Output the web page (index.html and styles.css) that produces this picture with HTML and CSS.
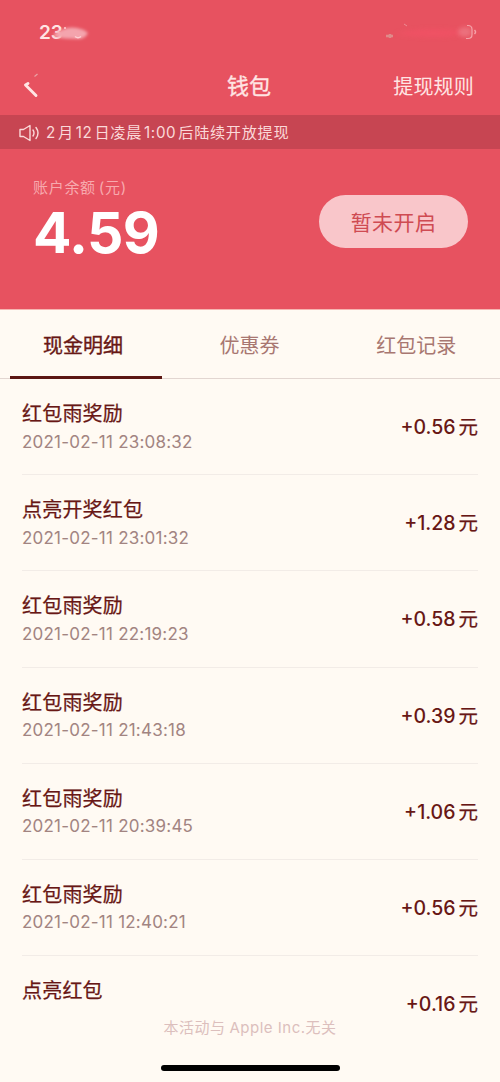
FILE: index.html
```html
<!DOCTYPE html>
<html lang="zh-CN">
<head>
<meta charset="utf-8">
<meta name="viewport" content="width=device-width, initial-scale=1">
<title>钱包</title>
<link rel="stylesheet" href="styles.css">
</head>
<body>
<div class="screen">
  <header class="hero">
    <div class="status">
      <div class="clock"><span>23</span><svg class="smudge" width="36" height="18" viewBox="0 0 36 18"><defs><filter id="soft" x="-30%" y="-50%" width="160%" height="200%"><feGaussianBlur stdDeviation="1.6"/></filter></defs><path d="M0 9Q8 3 18 2.500Q29 3 34 8Q31 14 24 14Q11 14 0 12Z" fill="#f4a4ad" filter="url(#soft)"/><path d="M11 2v2M21 11.500q3 2.500 6 0" stroke="#ffd0d4" stroke-width="1.500" fill="none"/></svg></div>
      <svg class="indicators" width="94" height="24" viewBox="0 0 94 24"><defs><filter id="haze" x="-20%" y="-100%" width="140%" height="300%"><feGaussianBlur stdDeviation="2"/></filter></defs><path d="M8 14Q38 5 84 12Q60 20 24 16Z" fill="#f75168" opacity=".5" filter="url(#haze)"/><ellipse cx="78" cy="12" rx="7" ry="5" fill="#f0a0a7" opacity=".4" filter="url(#haze)"/><path d="M-1 16h7M3 14v4" stroke="#dda29b" stroke-width="2.500" opacity=".7"/><path d="M17 4l3 2" stroke="#ee8c94"/><path d="M80 5.500h1q4 0 4 4v5q0 4-4 4h-2" fill="none" stroke="#f5a2a9" stroke-width="1.200"/><path d="M87.500 10q2 2 0 4" fill="none" stroke="#f5a2a9" stroke-width="1.500"/></svg>
    </div>
    <nav class="nav">
      <svg class="back" width="18" height="28" viewBox="0 0 18 28"><path d="M12.500 4.500l3-2.500" stroke="#e9a2a4" stroke-width="1.200"/><path d="M6 11.500L3.500 13L14 23.500" fill="none" stroke="#ffe5e4" stroke-width="2.900" stroke-linecap="round" stroke-linejoin="round"/></svg>
      <h1 class="title">钱包</h1>
      <a class="rules">提现规则</a>
    </nav>
    <div class="notice">
      <svg class="speaker" width="21" height="18" viewBox="0 0 21 18" fill="none" stroke="#fbd9d9" stroke-width="1.400" stroke-linejoin="round" stroke-linecap="round"><path d="M1 5.500h3.500L11 1.500v15L4.500 12.500H1z"/><path d="M14 6q2 3 0 6M17 3.500q4 5.500 0 11"/></svg>
      <p class="notice-text"><span>2</span><span>月</span><span>12</span><span>日凌晨</span><span>1:00</span><span>后陆续开放提现</span></p>
    </div>
    <section class="balance">
      <div>
        <p class="label"><span>账户余额</span><span>(元)</span></p>
        <p class="sum">4.59</p>
      </div>
      <button class="withdraw">暂未开启</button>
    </section>
  </header>
  <div class="tabs">
    <div class="tab active">现金明细</div>
    <div class="tab">优惠券</div>
    <div class="tab">红包记录</div>
  </div>
  <ul class="list">
    <li class="row"><div><p class="name">红包雨奖励</p><p class="time">2021-02-11 23:08:32</p></div><p class="amount"><span>+0.56</span><span class="unit">元</span></p></li>
    <li class="row"><div><p class="name">点亮开奖红包</p><p class="time">2021-02-11 23:01:32</p></div><p class="amount"><span>+1.28</span><span class="unit">元</span></p></li>
    <li class="row"><div><p class="name">红包雨奖励</p><p class="time">2021-02-11 22:19:23</p></div><p class="amount"><span>+0.58</span><span class="unit">元</span></p></li>
    <li class="row"><div><p class="name">红包雨奖励</p><p class="time">2021-02-11 21:43:18</p></div><p class="amount"><span>+0.39</span><span class="unit">元</span></p></li>
    <li class="row"><div><p class="name">红包雨奖励</p><p class="time">2021-02-11 20:39:45</p></div><p class="amount"><span>+1.06</span><span class="unit">元</span></p></li>
    <li class="row"><div><p class="name">红包雨奖励</p><p class="time">2021-02-11 12:40:21</p></div><p class="amount"><span>+0.56</span><span class="unit">元</span></p></li>
    <li class="row last"><div><p class="name">点亮红包</p></div><p class="amount"><span>+0.16</span><span class="unit">元</span></p></li>
  </ul>
  <footer class="footer">
    <p class="disclaimer"><span>本活动与</span><span>Apple Inc.无关</span></p>
    <div class="home-bar"></div>
  </footer>
</div>
</body>
</html>
```
FILE: styles.css
```css
* { box-sizing: border-box; margin: 0; padding: 0; }
body {
  font-family: Inter, "Noto Sans CJK SC", sans-serif;
  background: #fffaf3;
  color: #681715;
}
.screen { position: relative; width: 500px; height: 1082px; overflow: hidden; }
.hero { height: 310px; background: #e75260; border-bottom: 1px solid #f6b5b1; color: #ffe5e4; }
.status { height: 60px; display: flex; justify-content: space-between; padding: 20px 17px 0 39px; }
.indicators { margin-right: 2px; overflow: visible; }
.clock { display: flex; height: 24px; align-items: center; font-size: 19px; font-weight: 600; }
.smudge { margin: 3px 0 0 -9px; overflow: visible; }
.nav {
  height: 55px; padding: 0 26px 4px 22px;
  display: grid; grid-template-columns: 1fr auto 1fr; align-items: center;
}
.title { padding-left: 2px; font-size: 22px; line-height: 30px; font-weight: 400; -webkit-text-stroke: .35px; }
.rules { justify-self: end; font-size: 20px; letter-spacing: .2px; line-height: 30px; padding-top: 2px; }
.notice {
  height: 34px; padding: 1px 0 0 19px; background: #c74552;
  display: flex; align-items: center; gap: 6px; color: #fbd9d9;
}
.notice-text { display: flex; gap: 2px; font-size: 15.200px; letter-spacing: .65px; line-height: 20px; padding-top: 1px; }
.balance { display: flex; justify-content: space-between; padding: 28px 32px 0 33px; }
.label { display: flex; gap: 3px; font-size: 15px; letter-spacing: .7px; line-height: 21px; color: #f7a9ae; }
.sum { font-size: 57px; line-height: 70px; font-weight: 700; letter-spacing: -.7px; color: #fff; }
.withdraw {
  width: 149px; height: 53px; margin-top: 18px; border: 0; border-radius: 27px;
  background: #f9c6ca; color: #cf4b52; font: 400 21px/53px "Noto Sans CJK SC", sans-serif; letter-spacing: .4px;
}
.tabs {
  height: 69px; display: grid; grid-template-columns: repeat(3, 1fr);
  border-bottom: 1px solid #e2d6d1;
}
.tab { height: 69px; padding: 3px 1px 0 0; text-align: center; font-size: 20px; line-height: 67px; color: #a87771; }
.tab.active {
  width: 152px; margin-left: 10px; padding-right: 6px; color: #681715;
  border-bottom: 3px solid #5c1713; -webkit-text-stroke: .4px;
}
.list { list-style: none; padding: 0 22px; }
.row { height: 96.200px; display: flex; justify-content: space-between; border-bottom: 1px solid #f2ece7; }
.row.last { border: 0; }
.name { margin-top: 20px; font-size: 20px; line-height: 30px; letter-spacing: .2px; -webkit-text-stroke: .25px; }
.time { margin-top: -.5px; font-size: 17px; line-height: 26px; letter-spacing: .22px; color: #a28481; }
.amount { display: flex; gap: 3px; font-size: 19.500px; line-height: 96px; font-weight: 500; }
.unit { font-weight: 400; -webkit-text-stroke: .25px; }
.footer {
  position: absolute; inset: auto 0 0; height: 66px;
  display: flex; flex-direction: column; align-items: center;
}
.disclaimer { display: flex; gap: 4px; font-size: 15px; line-height: 24px; letter-spacing: .5px; color: #dcbfbd; }
.home-bar { width: 179px; height: 6px; margin-top: 25px; border-radius: 3px; background: #000; }
```
